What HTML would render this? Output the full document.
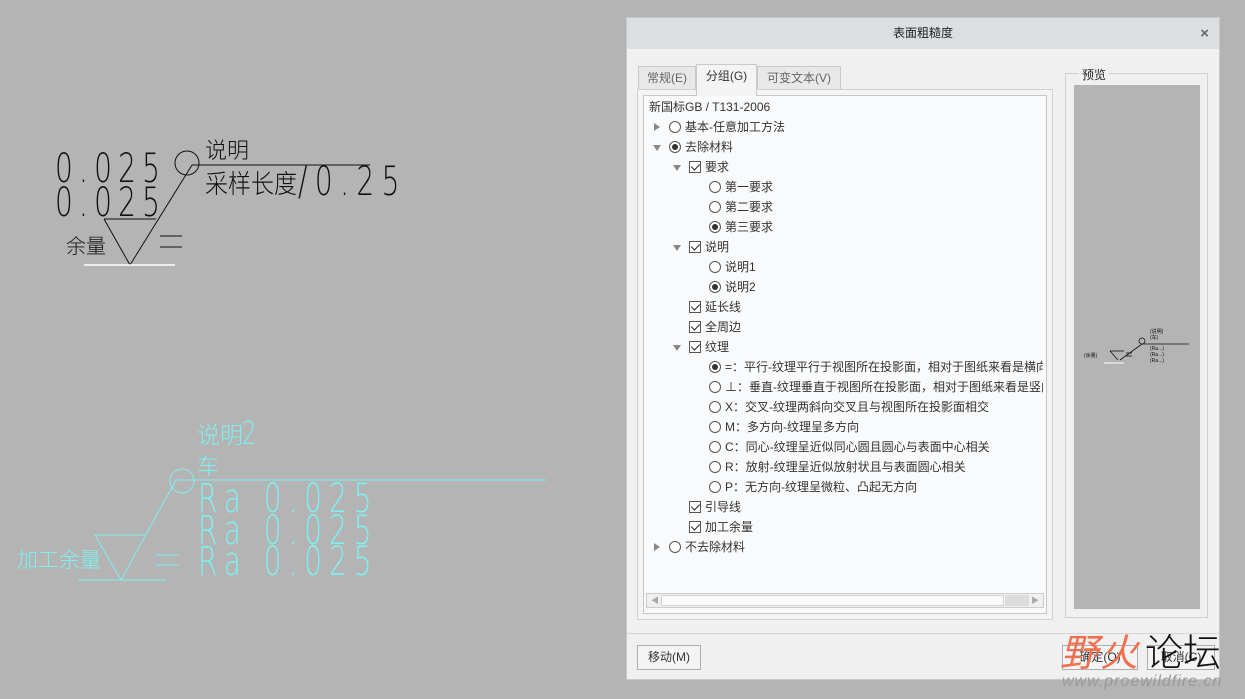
<!DOCTYPE html>
<html><head><meta charset="utf-8">
<style>
*{margin:0;padding:0;box-sizing:border-box}
body{width:1245px;height:699px;background:#b4b4b4;position:relative;overflow:hidden;font-family:"Liberation Sans","Noto Sans CJK SC",sans-serif;font-size:12px;color:#333}
.abs{position:absolute}
#dlg{left:626px;top:17px;width:594px;height:663px;background:#f0f0f0;border:1px solid #c8c8c8}
#title{left:0;top:0;width:592px;height:31px;background:#dcdfe1;text-align:center;line-height:31px;font-size:12px;color:#222}
.tab{top:48px;height:24px;line-height:23px;text-align:center;border:1px solid #c9c9c9;border-bottom:none;background:#e8e8e8;color:#666}
#tree{left:16px;top:77px;width:404px;height:519px;background:#f9fafb;border:1px solid #c6c6c6}
.row{position:absolute;height:20px;line-height:20px;white-space:nowrap;font-size:12px;color:#333}
.exp{position:absolute;width:0;height:0}
.er{border-left:6px solid #888;border-top:4px solid transparent;border-bottom:4px solid transparent;top:6px}
.ed{border-top:6px solid #888;border-left:4px solid transparent;border-right:4px solid transparent;top:8px}
.rad{position:absolute;top:4px;width:12px;height:12px;border:1px solid #555;border-radius:50%;background:#fff}
.rad.on::after{content:"";position:absolute;left:2px;top:2px;width:6px;height:6px;border-radius:50%;background:#333}
.chk{position:absolute;top:4px;width:12px;height:12px;border:1px solid #555;background:#fff}
.chk::after{content:"";position:absolute;left:3px;top:0px;width:4px;height:7px;border:solid #222;border-width:0 1.5px 1.5px 0;transform:rotate(45deg)}
.btn{height:25px;border:1px solid #adadad;background:#f4f4f4;line-height:23px;text-align:center;font-size:12px;color:#333}
</style></head><body>

<svg class="abs" style="left:0;top:0" width="620" height="699">
 <g stroke="#111" fill="none" stroke-width="1">
  <circle cx="187" cy="163" r="12"/>
  <line x1="192" y1="165" x2="370" y2="165"/>
  <line x1="192" y1="165" x2="130" y2="265"/>
  <line x1="104" y1="219" x2="156" y2="219"/>
  <line x1="104" y1="219" x2="130" y2="265"/>
  <line x1="160" y1="236" x2="182" y2="236"/>
  <line x1="160" y1="247" x2="182" y2="247"/>
 </g>
 <line x1="84" y1="265" x2="175" y2="265" stroke="#fff" stroke-width="1.5"/>
 <g font-family="DejaVu Sans,sans-serif" font-weight="200" fill="#111" font-size="40">
  <text transform="translate(55,182) scale(0.7,1)" x="0" y="0" textLength="150" lengthAdjust="spacing">0.025</text>
  <text transform="translate(55,216) scale(0.7,1)" x="0" y="0" textLength="150" lengthAdjust="spacing">0.025</text>
  <text transform="translate(298,195) scale(0.7,1)" x="0" y="0" textLength="145" lengthAdjust="spacing">/0.25</text>
 </g>
 <text x="205" y="158" font-family="Noto Sans CJK SC,sans-serif" font-size="22" fill="#111" font-weight="300">说明</text>
 <text x="205" y="193" font-family="Noto Sans CJK SC,sans-serif" font-size="26" fill="#111" font-weight="300" textLength="92" lengthAdjust="spacingAndGlyphs">采样长度</text>
 <text x="66" y="253" font-family="Noto Sans CJK SC,sans-serif" font-size="20" fill="#111" font-weight="300">余量</text>

 <g stroke="#7ff0f0" fill="none" stroke-width="1">
  <circle cx="182" cy="481" r="12"/>
  <line x1="176" y1="480" x2="546" y2="480"/>
  <line x1="176" y1="480" x2="121" y2="580"/>
  <line x1="95" y1="535" x2="146" y2="535"/>
  <line x1="95" y1="535" x2="121" y2="580"/>
  <line x1="156" y1="555" x2="179" y2="555"/>
  <line x1="156" y1="565" x2="179" y2="565"/>
  <line x1="78" y1="580" x2="166" y2="580"/>
 </g>
 <g font-family="DejaVu Sans,sans-serif" font-weight="200" fill="#7ff0f0" font-size="40">
  <text transform="translate(198,512) scale(0.7,1)" x="0" y="0" textLength="248" lengthAdjust="spacing">Ra 0.025</text>
  <text transform="translate(198,544) scale(0.7,1)" x="0" y="0" textLength="248" lengthAdjust="spacing">Ra 0.025</text>
  <text transform="translate(198,575) scale(0.7,1)" x="0" y="0" textLength="248" lengthAdjust="spacing">Ra 0.025</text>
  <text transform="translate(242,444) scale(0.7,1)" x="0" y="0" font-size="32">2</text>
 </g>
 <g font-family="Noto Sans CJK SC,sans-serif" fill="#7ff0f0" font-weight="300">
  <text x="197" y="443" font-size="23">说明</text>
  <text x="197" y="474" font-size="22">车</text>
  <text x="17" y="567" font-size="21">加工余量</text>
 </g>
</svg>

<div id="dlg" class="abs">
 <div id="title" class="abs">表面粗糙度<span class="abs" style="right:10px;top:0;font-size:15px;color:#666;font-weight:bold">×</span></div>
 <div class="tab abs" style="left:11px;width:58px">常规(E)</div>
 <div class="tab abs" style="left:69px;width:61px;top:46px;height:32px;background:#f4f4f4;color:#333;z-index:2">分组(G)</div>
 <div class="tab abs" style="left:130px;width:84px">可变文本(V)</div>
 <div class="abs" style="left:10px;top:71px;width:416px;height:531px;border:1px solid #d0d0d0;background:#f4f4f4"></div>
 <div id="tree" class="abs">
  <div class="row" style="left:5px;top:1px">新国标GB / T131-2006</div>
  <div class="row" style="left:0;top:21px;width:390px"><i class="exp er" style="left:10px"></i><i class="rad" style="left:25px"></i><span style="position:absolute;left:41px">基本-任意加工方法</span></div>
  <div class="row" style="left:0;top:41px;width:390px"><i class="exp ed" style="left:9px"></i><i class="rad on" style="left:25px"></i><span style="position:absolute;left:41px">去除材料</span></div>
  <div class="row" style="left:0;top:61px;width:390px"><i class="exp ed" style="left:29px"></i><i class="chk" style="left:45px"></i><span style="position:absolute;left:61px">要求</span></div>
  <div class="row" style="left:0;top:81px;width:390px"><i class="rad" style="left:65px"></i><span style="position:absolute;left:81px">第一要求</span></div>
  <div class="row" style="left:0;top:101px;width:390px"><i class="rad" style="left:65px"></i><span style="position:absolute;left:81px">第二要求</span></div>
  <div class="row" style="left:0;top:121px;width:390px"><i class="rad on" style="left:65px"></i><span style="position:absolute;left:81px">第三要求</span></div>
  <div class="row" style="left:0;top:141px;width:390px"><i class="exp ed" style="left:29px"></i><i class="chk" style="left:45px"></i><span style="position:absolute;left:61px">说明</span></div>
  <div class="row" style="left:0;top:161px;width:390px"><i class="rad" style="left:65px"></i><span style="position:absolute;left:81px">说明1</span></div>
  <div class="row" style="left:0;top:181px;width:390px"><i class="rad on" style="left:65px"></i><span style="position:absolute;left:81px">说明2</span></div>
  <div class="row" style="left:0;top:201px;width:390px"><i class="chk" style="left:45px"></i><span style="position:absolute;left:61px">延长线</span></div>
  <div class="row" style="left:0;top:221px;width:390px"><i class="chk" style="left:45px"></i><span style="position:absolute;left:61px">全周边</span></div>
  <div class="row" style="left:0;top:241px;width:390px"><i class="exp ed" style="left:29px"></i><i class="chk" style="left:45px"></i><span style="position:absolute;left:61px">纹理</span></div>
  <div class="row" style="left:0;top:261px;width:399px;overflow:hidden"><i class="rad on" style="left:65px"></i><span style="position:absolute;left:81px">=：平行-纹理平行于视图所在投影面，相对于图纸来看是横向</span></div>
  <div class="row" style="left:0;top:281px;width:399px;overflow:hidden"><i class="rad" style="left:65px"></i><span style="position:absolute;left:81px">⊥：垂直-纹理垂直于视图所在投影面，相对于图纸来看是竖向</span></div>
  <div class="row" style="left:0;top:301px;width:390px"><i class="rad" style="left:65px"></i><span style="position:absolute;left:81px">X：交叉-纹理两斜向交叉且与视图所在投影面相交</span></div>
  <div class="row" style="left:0;top:321px;width:390px"><i class="rad" style="left:65px"></i><span style="position:absolute;left:81px">M：多方向-纹理呈多方向</span></div>
  <div class="row" style="left:0;top:341px;width:390px"><i class="rad" style="left:65px"></i><span style="position:absolute;left:81px">C：同心-纹理呈近似同心圆且圆心与表面中心相关</span></div>
  <div class="row" style="left:0;top:361px;width:390px"><i class="rad" style="left:65px"></i><span style="position:absolute;left:81px">R：放射-纹理呈近似放射状且与表面圆心相关</span></div>
  <div class="row" style="left:0;top:381px;width:390px"><i class="rad" style="left:65px"></i><span style="position:absolute;left:81px">P：无方向-纹理呈微粒、凸起无方向</span></div>
  <div class="row" style="left:0;top:401px;width:390px"><i class="chk" style="left:45px"></i><span style="position:absolute;left:61px">引导线</span></div>
  <div class="row" style="left:0;top:421px;width:390px"><i class="chk" style="left:45px"></i><span style="position:absolute;left:61px">加工余量</span></div>
  <div class="row" style="left:0;top:441px;width:390px"><i class="exp er" style="left:10px"></i><i class="rad" style="left:25px"></i><span style="position:absolute;left:41px">不去除材料</span></div>
  <div class="abs" style="left:2px;top:497px;width:398px;height:15px;border:1px solid #ccc;background:#f0f0f0">
   <div class="abs" style="left:14px;top:1px;width:343px;height:11px;background:#fafafa;border:1px solid #d4d4d4"></div>
   <div class="abs" style="left:358px;top:1px;width:24px;height:11px;background:#dcdcdc"></div>
   <span class="abs" style="left:4px;top:0;font-size:8px;color:#aaa;line-height:13px">◀</span>
   <span class="abs" style="right:4px;top:0;font-size:8px;color:#aaa;line-height:13px">▶</span>
  </div>
 </div>
 <div class="abs" style="left:438px;top:55px;width:143px;height:545px;border:1px solid #d0d0d0"></div>
 <div class="abs" style="left:452px;top:48px;background:#f0f0f0;padding:0 3px;font-size:12px;color:#222">预览</div>
 <div class="abs" style="left:447px;top:67px;width:126px;height:524px;background:#b4b4b4">
  <svg width="126" height="524"><g stroke="#111" fill="none" stroke-width="0.8"><line x1="68" y1="259" x2="115" y2="259"/><circle cx="68" cy="256" r="3"/><line x1="68" y1="259" x2="46" y2="275"/><line x1="36" y1="266" x2="50" y2="266"/><line x1="36" y1="266" x2="44" y2="275"/><line x1="52" y1="268" x2="58" y2="268"/><line x1="52" y1="271" x2="58" y2="271"/></g>
  <g font-size="5" fill="#111"><text x="10" y="272">(余量)</text><text x="76" y="248">(说明)</text><text x="76" y="254">(车)</text><text x="76" y="265">(Ra...)</text><text x="76" y="271">(Ra...)</text><text x="76" y="277">(Ra...)</text></g><line x1="30" y1="278" x2="50" y2="278" stroke="#fff"/></svg>
 </div>
 <div class="abs" style="left:0;top:615px;width:592px;height:1px;background:#d6d6d6"></div>
 <div class="btn abs" style="left:10px;top:627px;width:64px">移动(M)</div>
 <div class="btn abs" style="left:435px;top:627px;width:76px">确定(O)</div>
 <div class="btn abs" style="left:520px;top:627px;width:68px">取消(C)</div>
</div>

<div class="abs" style="left:1060px;top:628px;font-family:'Noto Sans CJK SC',sans-serif;font-size:38px;line-height:44px;color:#f07050;font-style:italic;letter-spacing:2px">野火</div>
<div class="abs" style="left:1145px;top:628px;font-family:'Noto Sans CJK SC',sans-serif;font-size:38px;line-height:44px;color:#111;font-weight:300">论坛</div>
<div class="abs" style="left:1062px;top:673px;font-size:16px;color:#999;font-style:italic;letter-spacing:1px">www.proewildfire.cn</div>
</body></html>
